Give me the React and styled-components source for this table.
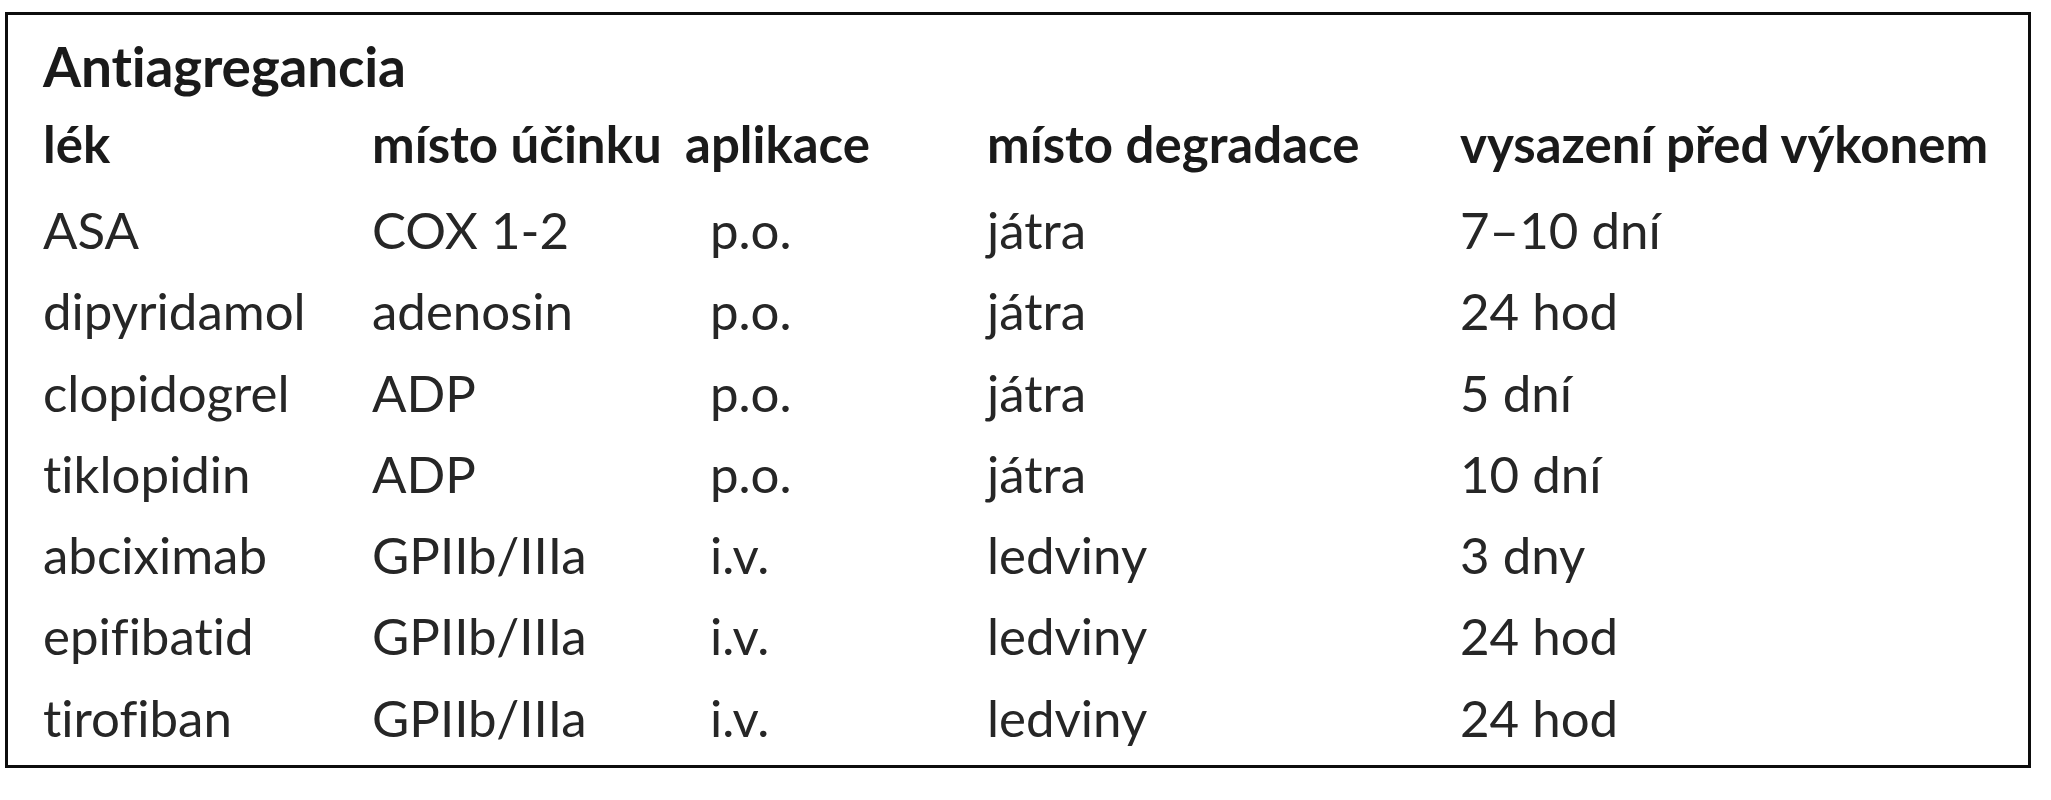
import React from "react";
import styled, { createGlobalStyle } from "styled-components";

const Global = createGlobalStyle`
  html, body { margin: 0; padding: 0; background: #ffffff; }
  body {
    font-family: "Lato", "Open Sans", "Noto Sans", sans-serif;
    color: #1e1e1e;
    font-variant-ligatures: none;
    font-feature-settings: "liga" 0, "clig" 0;
  }
`;

const Frame = styled.section`
  box-sizing: border-box;
  margin: 12px 0 0 5px;
  width: 2026px;
  height: 756px;
  border: 3px solid #0d0d0d;
  padding: 14px 0 7px 35px;
  display: flex;
  flex-direction: column;
`;

const Title = styled.h2`
  margin: 0;
  font-size: 55px;
  font-weight: 700;
  line-height: 74px;
  color: #1a1a1a;
  letter-spacing: -0.2px;
`;

const Row = styled.div`
  display: grid;
  grid-template-columns: 329px 338px 277px 473px auto;
  font-size: 51px;
  line-height: ${(p) => (p.$head ? "81px" : "81.3px")};
  height: ${(p) => (p.$head ? "86px" : "81.3px")};
  font-weight: ${(p) => (p.$head ? 700 : 400)};
  color: ${(p) => (p.$head ? "#1a1a1a" : "#262626")};
  white-space: nowrap;
`;

const Cell = styled.div`
  margin-left: ${(p) => p.$shift || 0}px;
`;

const rows = [
  ["ASA", "COX 1-2", "p.o.", "játra", "7–10 dní"],
  ["dipyridamol", "adenosin", "p.o.", "játra", "24 hod"],
  ["clopidogrel", "ADP", "p.o.", "játra", "5 dní"],
  ["tiklopidin", "ADP", "p.o.", "játra", "10 dní"],
  ["abciximab", "GPIIb/IIIa", "i.v.", "ledviny", "3 dny"],
  ["epifibatid", "GPIIb/IIIa", "i.v.", "ledviny", "24 hod"],
  ["tirofiban", "GPIIb/IIIa", "i.v.", "ledviny", "24 hod"],
];

export default function App() {
  return (
    <>
      <Global />
      <Frame>
        <Title>Antiagregancia</Title>
        <Row $head>
          <Cell>lék</Cell>
          <Cell>místo účinku</Cell>
          <Cell $shift={-25}>aplikace</Cell>
          <Cell>místo degradace</Cell>
          <Cell>vysazení před výkonem</Cell>
        </Row>
        {rows.map((r) => (
          <Row key={r[0]}>
            {r.map((c, i) => (
              <Cell key={i}>{c}</Cell>
            ))}
          </Row>
        ))}
      </Frame>
    </>
  );
}
